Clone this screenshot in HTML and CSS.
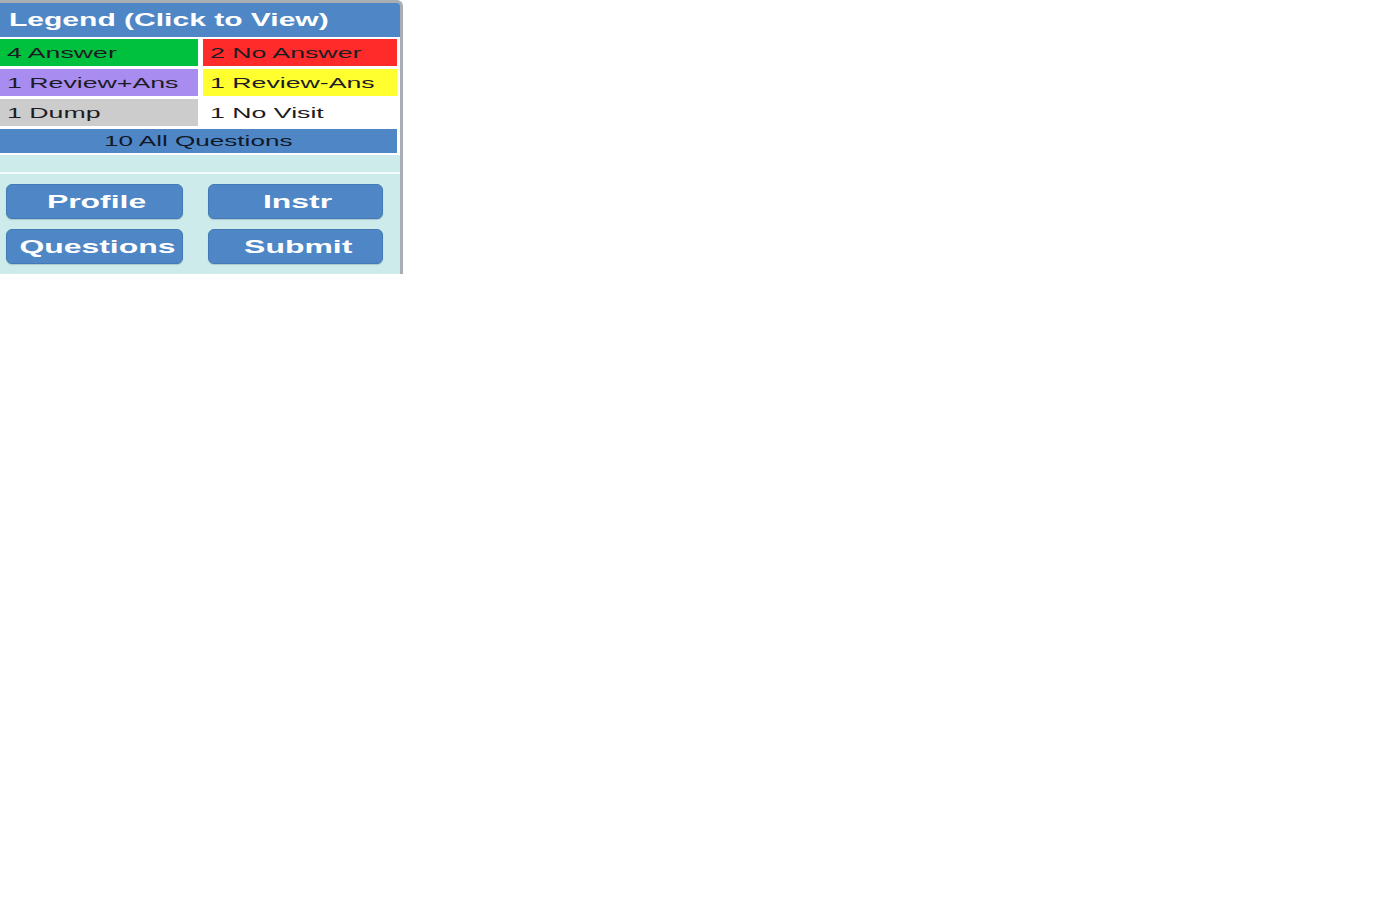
FILE: index.html
```html
<!DOCTYPE html>
<html>
<head>
<meta charset="utf-8">
<link rel="stylesheet" href="styles.css">
</head>
<body>
<div class="panel">
  <div class="header"><span class="wide title">Legend (Click to View)</span></div>
  <div class="legend">
    <div class="cell answer"><span class="wide">4 Answer</span></div>
    <div class="cell noanswer"><span class="wide">2 No Answer</span></div>
    <div class="cell reviewplus"><span class="wide">1 Review+Ans</span></div>
    <div class="cell reviewminus"><span class="wide">1 Review-Ans</span></div>
    <div class="cell dump"><span class="wide">1 Dump</span></div>
    <div class="cell novisit"><span class="wide">1 No Visit</span></div>
    <div class="cell all"><span class="wide center">10 All Questions</span></div>
  </div>
  <div class="spacer"></div>
  <div class="buttons">
    <button class="btn"><span class="wide center">Profile</span></button>
    <button class="btn"><span class="wide center">Instr</span></button>
    <button class="btn"><span class="wide center">Questions</span></button>
    <button class="btn"><span class="wide center">Submit</span></button>
  </div>
</div>
</body>
</html>
```
FILE: styles.css
```css
html, body {
  margin: 0;
  padding: 0;
  background: #ffffff;
}
body {
  font-family: "Liberation Sans", Arial, sans-serif;
}
.panel {
  width: 400px;
  border-top: 3px solid #a8aeb3;
  border-right: 3px solid #a8aeb3;
  border-top-right-radius: 6px;
  background: #cdebea;
  padding-bottom: 10px;
}
.wide {
  display: inline-block;
  white-space: nowrap;
  transform-origin: left center;
  transform: scaleX(1.78);
}
.wide.center {
  transform-origin: center center;
}
.header {
  height: 34px;
  line-height: 34px;
  background: #4f87c6;
  color: #ffffff;
  font-size: 19px;
  font-weight: bold;
  padding-left: 9px;
  border-top-right-radius: 3px;
}
.header .title {
  transform: scaleX(1.58);
}
.legend {
  display: grid;
  grid-template-columns: 198px 194px;
  grid-template-rows: 27px 27px 27px 24px;
  column-gap: 5px;
  row-gap: 3px;
  padding: 2px 3px 2px 0;
  background: #ffffff;
}
.cell {
  font-size: 15px;
  line-height: 27px;
  padding-left: 7px;
  color: #1c1c24;
}
.answer { background: #00c13e; }
.noanswer { background: #ff2b2b; padding-left: 7px; }
.reviewplus { background: #a98cf0; }
.reviewminus { background: #ffff30; padding-left: 7px; }
.dump { background: #cccccc; }
.novisit { background: #ffffff; padding-left: 7px; }
.all {
  grid-column: 1 / span 2;
  line-height: 24px;
  background: #4f87c6;
  text-align: center;
  padding-left: 0;
  color: #111827;
}
.all .wide {
  transform: scaleX(1.74);
}
.spacer {
  height: 17px;
  border-bottom: 2px solid #f2fbfb;
}
.buttons {
  display: grid;
  grid-template-columns: 177px 175px;
  column-gap: 25px;
  row-gap: 10px;
  padding: 10px 0 0 6px;
}
.btn {
  height: 35px;
  margin: 0;
  padding: 0 0 0 5px;
  border: 1px solid #4479b8;
  border-radius: 6px;
  background: #4f87c6;
  color: #ffffff;
  font-family: "Liberation Sans", Arial, sans-serif;
  font-size: 19px;
  font-weight: bold;
  line-height: 33px;
  text-align: center;
  box-shadow: 0 1px 1px rgba(60, 90, 120, 0.25);
}
.btn .wide {
  transform: scaleX(1.68);
}
```
